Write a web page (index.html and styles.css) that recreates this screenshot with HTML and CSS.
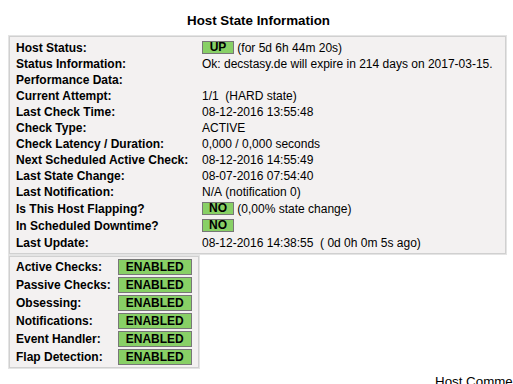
FILE: index.html
```html
<!DOCTYPE html>
<html lang="en">
<head>
    <meta charset="UTF-8">
    <title>Host State Information</title>
    <link rel="stylesheet" href="styles.css">
</head>
<body>

<div class="dataTitle">Host State Information</div>

<table class="stateInfoTable1">
    <tr class="badgeRow">
        <td class="dataVar">Host Status:</td>
        <td class="dataVal"><span class="hostUP">UP</span> (for 5d 6h 44m 20s)</td>
    </tr>
    <tr>
        <td class="dataVar">Status Information:</td>
        <td class="dataVal">Ok: decstasy.de will expire in 214 days on 2017-03-15.</td>
    </tr>
    <tr>
        <td class="dataVar">Performance Data:</td>
        <td class="dataVal"></td>
    </tr>
    <tr>
        <td class="dataVar">Current Attempt:</td>
        <td class="dataVal">1/1&nbsp;&nbsp;(HARD state)</td>
    </tr>
    <tr>
        <td class="dataVar">Last Check Time:</td>
        <td class="dataVal">08-12-2016 13:55:48</td>
    </tr>
    <tr>
        <td class="dataVar">Check Type:</td>
        <td class="dataVal">ACTIVE</td>
    </tr>
    <tr>
        <td class="dataVar">Check Latency / Duration:</td>
        <td class="dataVal">0,000&nbsp;/&nbsp;0,000 seconds</td>
    </tr>
    <tr>
        <td class="dataVar">Next Scheduled Active Check:</td>
        <td class="dataVal">08-12-2016 14:55:49</td>
    </tr>
    <tr>
        <td class="dataVar">Last State Change:</td>
        <td class="dataVal">08-07-2016 07:54:40</td>
    </tr>
    <tr>
        <td class="dataVar">Last Notification:</td>
        <td class="dataVal">N/A&nbsp;(notification 0)</td>
    </tr>
    <tr class="badgeRow">
        <td class="dataVar">Is This Host Flapping?</td>
        <td class="dataVal"><span class="flapNO">NO</span> (0,00% state change)</td>
    </tr>
    <tr class="badgeRow">
        <td class="dataVar">In Scheduled Downtime?</td>
        <td class="dataVal"><span class="downtimeNO">NO</span></td>
    </tr>
    <tr>
        <td class="dataVar">Last Update:</td>
        <td class="dataVal">08-12-2016 14:38:55&nbsp;&nbsp;( 0d 0h 0m 5s ago)</td>
    </tr>
</table>

<table class="stateInfoTable2">
    <tr>
        <td class="dataVar">Active Checks:</td>
        <td><span class="checksENABLED">ENABLED</span></td>
    </tr>
    <tr>
        <td class="dataVar">Passive Checks:</td>
        <td><span class="checksENABLED">ENABLED</span></td>
    </tr>
    <tr>
        <td class="dataVar">Obsessing:</td>
        <td><span class="checksENABLED">ENABLED</span></td>
    </tr>
    <tr>
        <td class="dataVar">Notifications:</td>
        <td><span class="checksENABLED">ENABLED</span></td>
    </tr>
    <tr>
        <td class="dataVar">Event Handler:</td>
        <td><span class="checksENABLED">ENABLED</span></td>
    </tr>
    <tr>
        <td class="dataVar">Flap Detection:</td>
        <td><span class="checksENABLED">ENABLED</span></td>
    </tr>
</table>

<div class="commentTitle">Host Comments</div>

</body>
</html>
```

FILE: styles.css
```css
body {
    margin: 0;
    padding: 0 7px 0 9px;
    font-family: "Liberation Sans", Arial, sans-serif;
    font-size: 12px;
    color: #000;
    background-color: #fff;
    overflow: hidden;
}
.dataTitle {
    text-align: center;
    font-weight: bold;
    font-size: 13.33px;
    line-height: 15px;
    margin: 13px 0 8px 0;
    padding-left: 2px;
}
table {
    border-collapse: collapse;
    background-color: #f3f1f1;
    border: 1px solid #d0d0d0;
    box-shadow: 0 0 0 1px #e4e4e4;
}
.stateInfoTable1 {
    width: 497px;
    table-layout: fixed;
}
.stateInfoTable1 tr:first-child td {
    padding-top: 2px;
}
.stateInfoTable1 tr:last-child td {
    padding-top: 1px;
    padding-bottom: 2px;
}
td {
    padding: 0;
    height: 16px;
    line-height: 16px;
    vertical-align: middle;
    white-space: nowrap;
}
.stateInfoTable1 .badgeRow td {
    height: 17px;
}
.dataVar {
    font-weight: bold;
    padding-left: 6px;
}
.stateInfoTable1 .dataVar {
    width: 186px;
}
.hostUP, .flapNO, .downtimeNO {
    display: inline-block;
    width: 30px;
    line-height: 11px;
    text-align: center;
    font-weight: bold;
    background-color: #88d066;
    border: 1px solid #777777;
    vertical-align: middle;
    margin-top: -1px;
}
.stateInfoTable2 {
    margin-top: 2px;
}
.stateInfoTable2 td {
    height: 18px;
}
.stateInfoTable2 tr:first-child td {
    padding-top: 1px;
}
.stateInfoTable2 tr:last-child td {
    padding-bottom: 1px;
}
.stateInfoTable2 .dataVar {
    padding-right: 7px;
}
.stateInfoTable2 td:last-child {
    padding-right: 6px;
}
.checksENABLED {
    display: inline-block;
    width: 72px;
    line-height: 14px;
    text-align: center;
    font-weight: bold;
    background-color: #88d066;
    border: 1px solid #777777;
    vertical-align: middle;
}
.commentTitle {
    font-size: 13.33px;
    line-height: 15px;
    margin-top: 6px;
    padding-left: 426px;
    white-space: nowrap;
}
```
